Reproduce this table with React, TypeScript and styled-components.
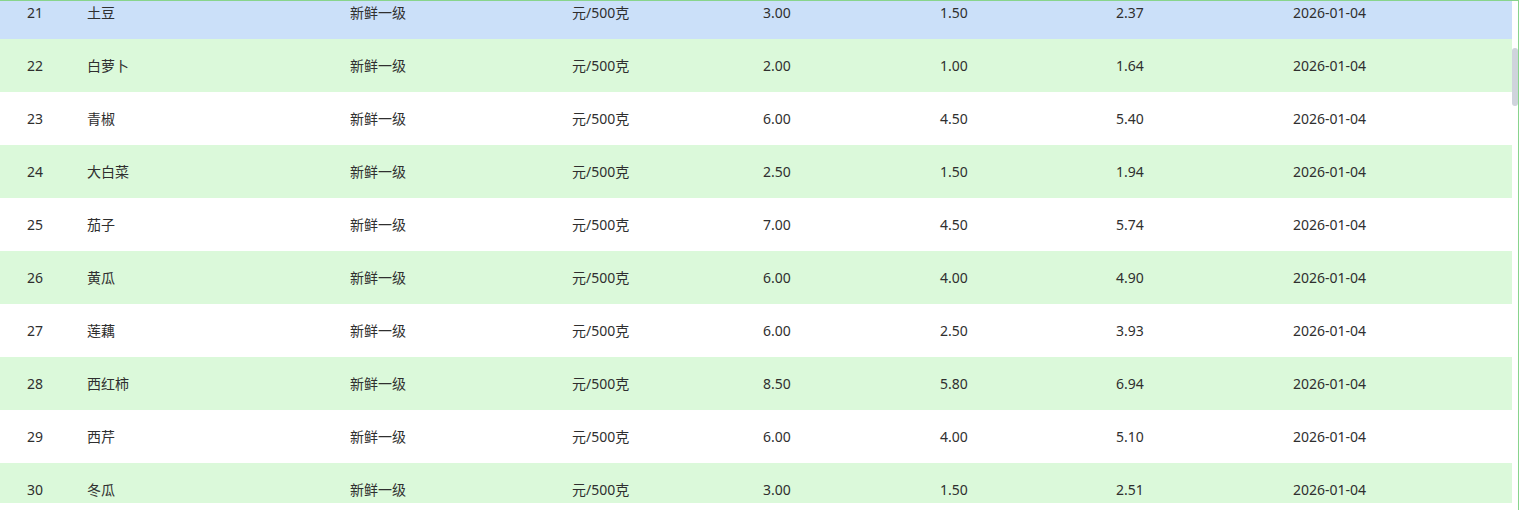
import React from "react";
import styled, { createGlobalStyle } from "styled-components";

const GlobalStyle = createGlobalStyle`
  html, body {
    margin: 0;
    padding: 0;
    background: #ffffff;
    overflow: hidden;
  }
  body {
    font-family: "Noto Sans", "Noto Sans CJK SC", sans-serif;
  }
`;

type Tone = "active" | "stripe" | "plain";

interface Item {
  no: number;
  name: string;
  grade: string;
  unit: string;
  high: string;
  low: string;
  avg: string;
  date: string;
}

const rows: Item[] = [
  { no: 21, name: "土豆", grade: "新鲜一级", unit: "元/500克", high: "3.00", low: "1.50", avg: "2.37", date: "2026-01-04" },
  { no: 22, name: "白萝卜", grade: "新鲜一级", unit: "元/500克", high: "2.00", low: "1.00", avg: "1.64", date: "2026-01-04" },
  { no: 23, name: "青椒", grade: "新鲜一级", unit: "元/500克", high: "6.00", low: "4.50", avg: "5.40", date: "2026-01-04" },
  { no: 24, name: "大白菜", grade: "新鲜一级", unit: "元/500克", high: "2.50", low: "1.50", avg: "1.94", date: "2026-01-04" },
  { no: 25, name: "茄子", grade: "新鲜一级", unit: "元/500克", high: "7.00", low: "4.50", avg: "5.74", date: "2026-01-04" },
  { no: 26, name: "黄瓜", grade: "新鲜一级", unit: "元/500克", high: "6.00", low: "4.00", avg: "4.90", date: "2026-01-04" },
  { no: 27, name: "莲藕", grade: "新鲜一级", unit: "元/500克", high: "6.00", low: "2.50", avg: "3.93", date: "2026-01-04" },
  { no: 28, name: "西红柿", grade: "新鲜一级", unit: "元/500克", high: "8.50", low: "5.80", avg: "6.94", date: "2026-01-04" },
  { no: 29, name: "西芹", grade: "新鲜一级", unit: "元/500克", high: "6.00", low: "4.00", avg: "5.10", date: "2026-01-04" },
  { no: 30, name: "冬瓜", grade: "新鲜一级", unit: "元/500克", high: "3.00", low: "1.50", avg: "2.51", date: "2026-01-04" },
];

const Frame = styled.div`
  box-sizing: border-box;
  width: 1519px;
  height: 520px;
  border-top: 1px solid #88d48c;
  border-right: 1px solid #88d48c;
  background: #ffffff;
`;

const Body = styled.div`
  display: flex;
  height: 502px;
`;

const Viewport = styled.div`
  flex: 1;
  overflow: hidden;
`;

const List = styled.div`
  margin-top: -15px;
`;

const toneBg: Record<Tone, string> = {
  active: "#cbe0f9",
  stripe: "#dbf9da",
  plain: "#ffffff",
};

const Row = styled.div<{ $tone: Tone }>`
  box-sizing: border-box;
  display: grid;
  grid-template-columns: 87px 263px 222px 191px 177px 176px 177px 1fr;
  align-items: center;
  height: 53px;
  padding-bottom: 1px;
  background: ${(p) => toneBg[p.$tone]};
  color: #2f2f2f;
  font-size: 14px;
`;

const Cell = styled.div<{ $center?: boolean }>`
  white-space: nowrap;
  text-align: ${(p) => (p.$center ? "center" : "left")};
  padding-right: ${(p) => (p.$center ? "17px" : "0")};
`;

const Track = styled.div`
  flex: none;
  width: 6px;
  background: #ffffff;
`;

const Thumb = styled.div`
  margin-top: 47px;
  height: 58px;
  border-radius: 3px;
  background: #cfd4dc;
`;

export default function App() {
  return (
    <>
      <GlobalStyle />
      <Frame>
        <Body>
          <Viewport>
            <List>
              {rows.map((r, i) => (
                <Row key={r.no} $tone={i === 0 ? "active" : r.no % 2 === 0 ? "stripe" : "plain"}>
                  <Cell $center>{r.no}</Cell>
                  <Cell>{r.name}</Cell>
                  <Cell>{r.grade}</Cell>
                  <Cell>{r.unit}</Cell>
                  <Cell>{r.high}</Cell>
                  <Cell>{r.low}</Cell>
                  <Cell>{r.avg}</Cell>
                  <Cell>{r.date}</Cell>
                </Row>
              ))}
            </List>
          </Viewport>
          <Track>
            <Thumb />
          </Track>
        </Body>
      </Frame>
    </>
  );
}
